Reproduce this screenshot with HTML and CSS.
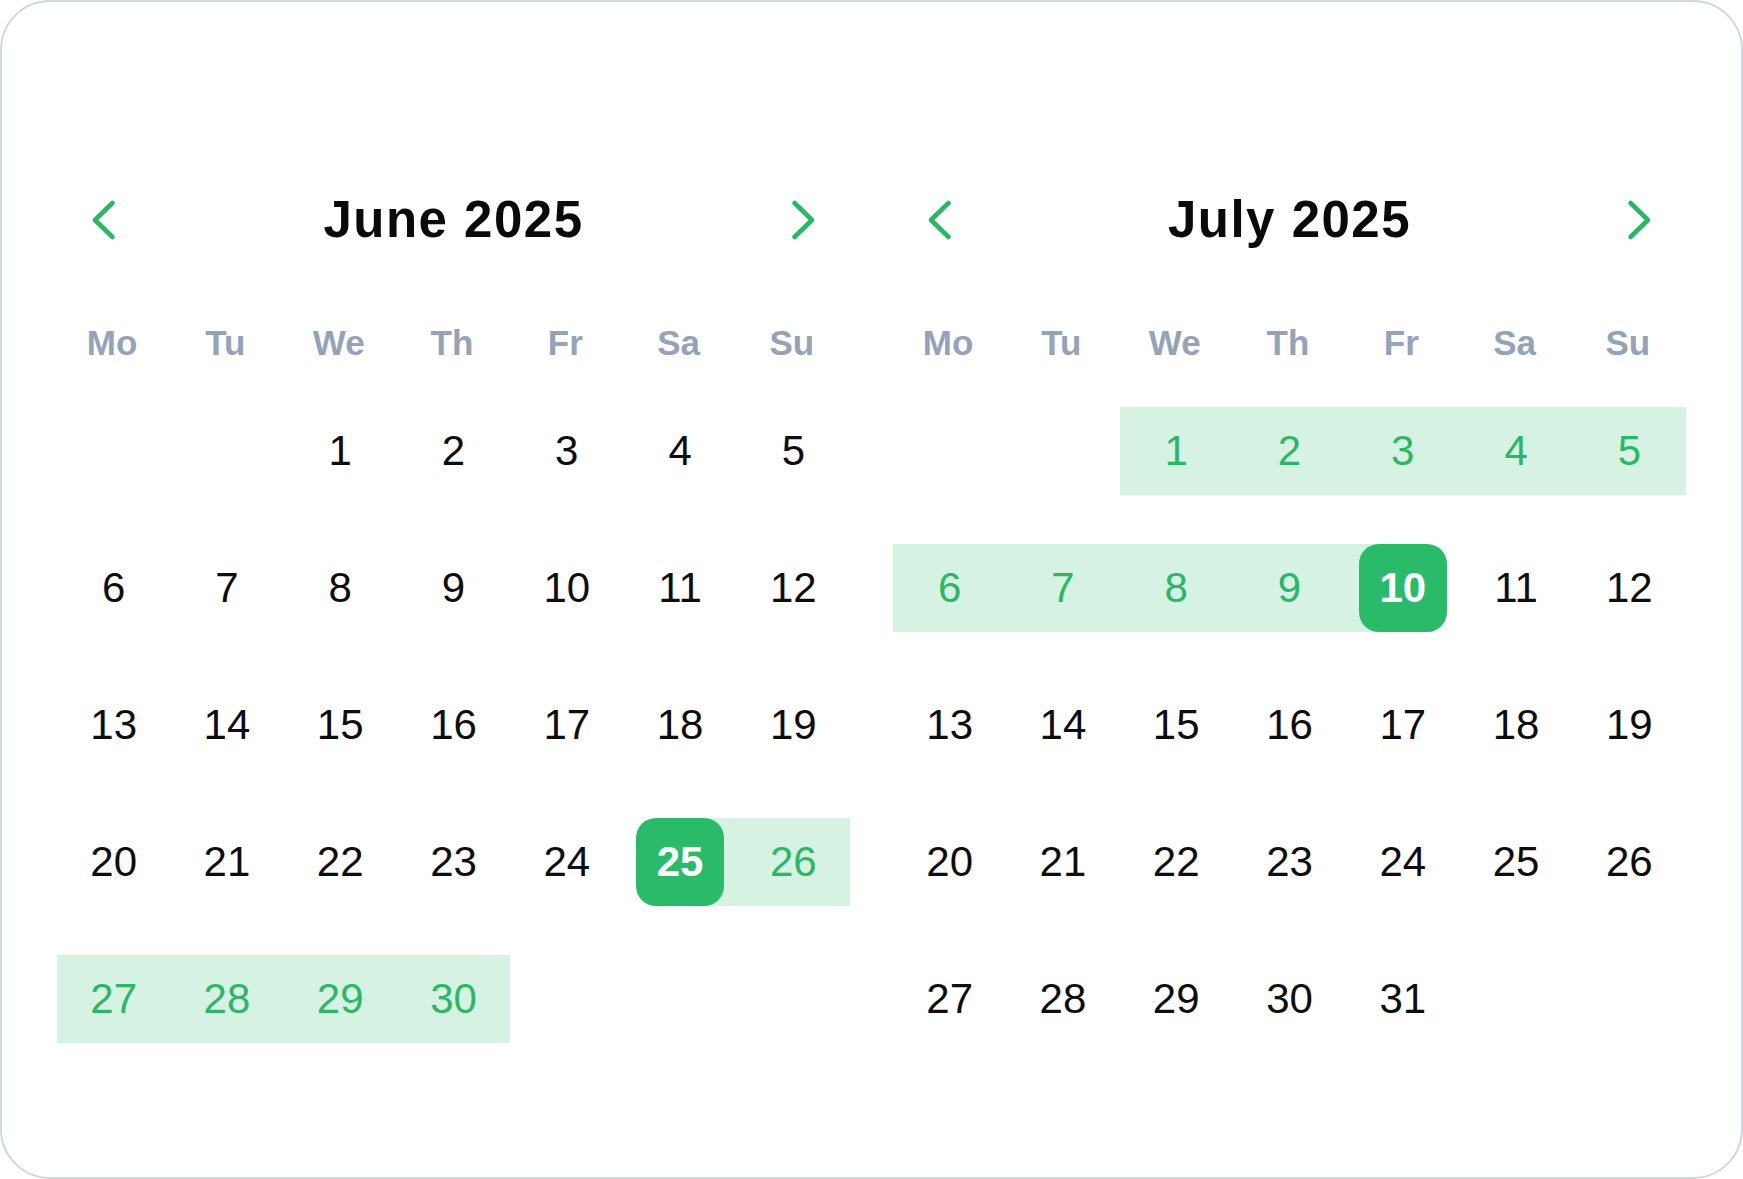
FILE: index.html
```html
<!DOCTYPE html>
<html lang="en">
<head>
    <meta charset="UTF-8">
    <meta name="viewport" content="width=device-width, initial-scale=1.0">
    <title>Date range</title>
    <link rel="stylesheet" href="styles.css">
</head>
<body>
    <div class="picker">
        <!-- June -->
        <div class="month">
            <div class="month-header">
                <button class="nav" aria-label="Previous month">
                    <svg viewBox="0 0 26 42"><polyline points="21.5,4 4,21 21.5,38"/></svg>
                </button>
                <h2 class="month-title">June 2025</h2>
                <button class="nav" aria-label="Next month">
                    <svg viewBox="0 0 26 42"><polyline points="4.5,4 22,21 4.5,38"/></svg>
                </button>
            </div>
            <div class="weekdays">
                <span>Mo</span><span>Tu</span><span>We</span><span>Th</span><span>Fr</span><span>Sa</span><span>Su</span>
            </div>
            <div class="days">
                <span class="day"></span><span class="day"></span>
                <span class="day">1</span><span class="day">2</span><span class="day">3</span><span class="day">4</span><span class="day">5</span>
                <span class="day">6</span><span class="day">7</span><span class="day">8</span><span class="day">9</span><span class="day">10</span><span class="day">11</span><span class="day">12</span>
                <span class="day">13</span><span class="day">14</span><span class="day">15</span><span class="day">16</span><span class="day">17</span><span class="day">18</span><span class="day">19</span>
                <span class="day">20</span><span class="day">21</span><span class="day">22</span><span class="day">23</span><span class="day">24</span>
                <span class="day range-start"><span class="pick">25</span></span>
                <span class="day in-range">26</span>
                <span class="day in-range">27</span><span class="day in-range">28</span><span class="day in-range">29</span><span class="day in-range">30</span>
            </div>
        </div>

        <!-- July -->
        <div class="month">
            <div class="month-header">
                <button class="nav" aria-label="Previous month">
                    <svg viewBox="0 0 26 42"><polyline points="21.5,4 4,21 21.5,38"/></svg>
                </button>
                <h2 class="month-title">July 2025</h2>
                <button class="nav" aria-label="Next month">
                    <svg viewBox="0 0 26 42"><polyline points="4.5,4 22,21 4.5,38"/></svg>
                </button>
            </div>
            <div class="weekdays">
                <span>Mo</span><span>Tu</span><span>We</span><span>Th</span><span>Fr</span><span>Sa</span><span>Su</span>
            </div>
            <div class="days">
                <span class="day"></span><span class="day"></span>
                <span class="day in-range">1</span><span class="day in-range">2</span><span class="day in-range">3</span><span class="day in-range">4</span><span class="day in-range">5</span>
                <span class="day in-range">6</span><span class="day in-range">7</span><span class="day in-range">8</span><span class="day in-range">9</span>
                <span class="day range-end"><span class="pick">10</span></span>
                <span class="day">11</span><span class="day">12</span>
                <span class="day">13</span><span class="day">14</span><span class="day">15</span><span class="day">16</span><span class="day">17</span><span class="day">18</span><span class="day">19</span>
                <span class="day">20</span><span class="day">21</span><span class="day">22</span><span class="day">23</span><span class="day">24</span><span class="day">25</span><span class="day">26</span>
                <span class="day">27</span><span class="day">28</span><span class="day">29</span><span class="day">30</span><span class="day">31</span>
            </div>
        </div>
    </div>
</body>
</html>
```

FILE: styles.css
```css
body {
    margin: 0;
    background: #ffffff;
    font-family: 'Liberation Sans', Arial, sans-serif;
    color: #0d0d0d;
}

.picker {
    box-sizing: border-box;
    height: 100vh;
    padding: 188px 55px 0;
    border: 2px solid #d0d8db;
    border-radius: 50px;
    display: flex;
    gap: 43px;
}

.month {
    flex: 1;
    min-width: 0;
}

.month-header {
    display: flex;
    align-items: center;
    height: 60px;
    padding: 0 25px;
}

.nav {
    width: 44px;
    height: 60px;
    padding: 0;
    border: none;
    background: none;
    display: flex;
    align-items: center;
    justify-content: center;
    cursor: pointer;
}

.nav svg {
    width: 26px;
    height: 42px;
    fill: none;
    stroke: #27b866;
    stroke-width: 4.6;
    stroke-linecap: round;
    stroke-linejoin: round;
}

.month-title {
    flex: 1;
    margin: 0;
    text-align: center;
    font-size: 51px;
    font-weight: 700;
    letter-spacing: 1.5px;
    line-height: 60px;
    color: #0a0a0a;
}

.weekdays {
    display: grid;
    grid-template-columns: repeat(7, 1fr);
    margin-top: 68px;
    height: 50px;
    line-height: 50px;
    text-align: center;
    font-size: 35px;
    font-weight: 700;
    color: #94a3b8;
}

.weekdays span {
    margin-right: 3px;
}

.days {
    display: grid;
    grid-template-columns: repeat(7, 1fr);
    grid-auto-rows: 88px;
    row-gap: 49px;
    margin-top: 39px;
}

.day {
    display: flex;
    align-items: center;
    justify-content: center;
    font-size: 42px;
}

.day.in-range {
    background: #d5f2e2;
    color: #2bb767;
}

.day.range-start {
    background: linear-gradient(to right, transparent 50%, #d5f2e2 50%);
}

.day.range-end {
    background: linear-gradient(to right, #d5f2e2 50%, transparent 50%);
}

.pick {
    width: 88px;
    height: 88px;
    border-radius: 20px;
    background: #29bb69;
    color: #ffffff;
    font-weight: 700;
    display: flex;
    align-items: center;
    justify-content: center;
}
```
